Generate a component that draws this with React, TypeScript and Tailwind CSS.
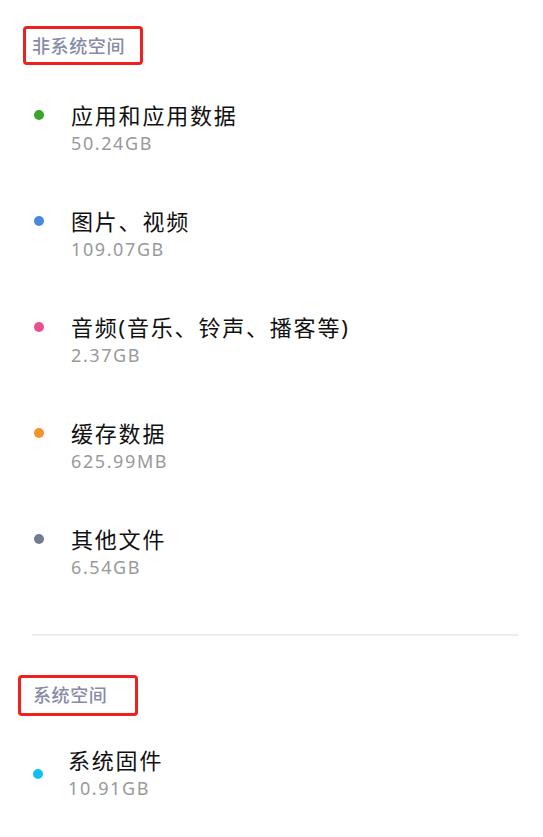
import React from "react";

const font = { fontFamily: '"Noto Sans", "Noto Sans CJK SC", sans-serif' };

type Item = { title: string; size: string; color: string };

const items: Item[] = [
  { title: "应用和应用数据", size: "50.24GB", color: "bg-[#3aa52a]" },
  { title: "图片、视频", size: "109.07GB", color: "bg-[#4a87e0]" },
  { title: "音频(音乐、铃声、播客等)", size: "2.37GB", color: "bg-[#ec4f8d]" },
  { title: "缓存数据", size: "625.99MB", color: "bg-[#f3932a]" },
  { title: "其他文件", size: "6.54GB", color: "bg-[#6f7c92]" },
];

export default function App() {
  return (
    <div className="w-[543px] h-[837px] bg-white overflow-hidden" style={font}>
      <div className="pt-[26px]">
        <div className="ml-[23px] w-[120px] h-[39px] border-[3px] border-[#f0201c] rounded-[4px] flex items-center pl-[6px]">
          <span className="text-[18px] leading-none text-[#878ba6] tracking-[0.6px] font-medium">非系统空间</span>
        </div>
        <div className="mt-[36px] flex flex-col gap-[50px]">
          {items.map((it) => (
            <div key={it.title} className="flex items-start pl-[34px]">
              <div className="h-[28px] flex items-center">
                <div className={`w-[10px] h-[10px] rounded-full ${it.color}`} />
              </div>
              <div className="ml-[27px]">
                <div className="text-[22px] leading-[28px] text-[#111111] tracking-[1.8px]">{it.title}</div>
                <div className="text-[18px] leading-[28px] text-[#999999] tracking-[1.6px]">{it.size}</div>
              </div>
            </div>
          ))}
        </div>
        <div className="mt-[53px] ml-[32px] w-[486px] h-[1.5px] bg-[#ececec]" />
        <div className="mt-[39px] ml-[18px] w-[120px] h-[41px] border-[3px] border-[#f0201c] rounded-[4px] flex items-center pl-[12px]">
          <span className="text-[18px] leading-none text-[#878ba6] tracking-[0.6px] font-medium">系统空间</span>
        </div>
        <div className="mt-[30px] flex items-center pl-[33px]">
          <div className="w-[10px] h-[10px] rounded-full bg-[#12bff4]" />
          <div className="ml-[25px]">
            <div className="text-[22px] leading-[28px] text-[#111111] tracking-[1.8px]">系统固件</div>
            <div className="text-[18px] leading-[28px] text-[#999999] tracking-[1.6px]">10.91GB</div>
          </div>
        </div>
      </div>
    </div>
  );
}
